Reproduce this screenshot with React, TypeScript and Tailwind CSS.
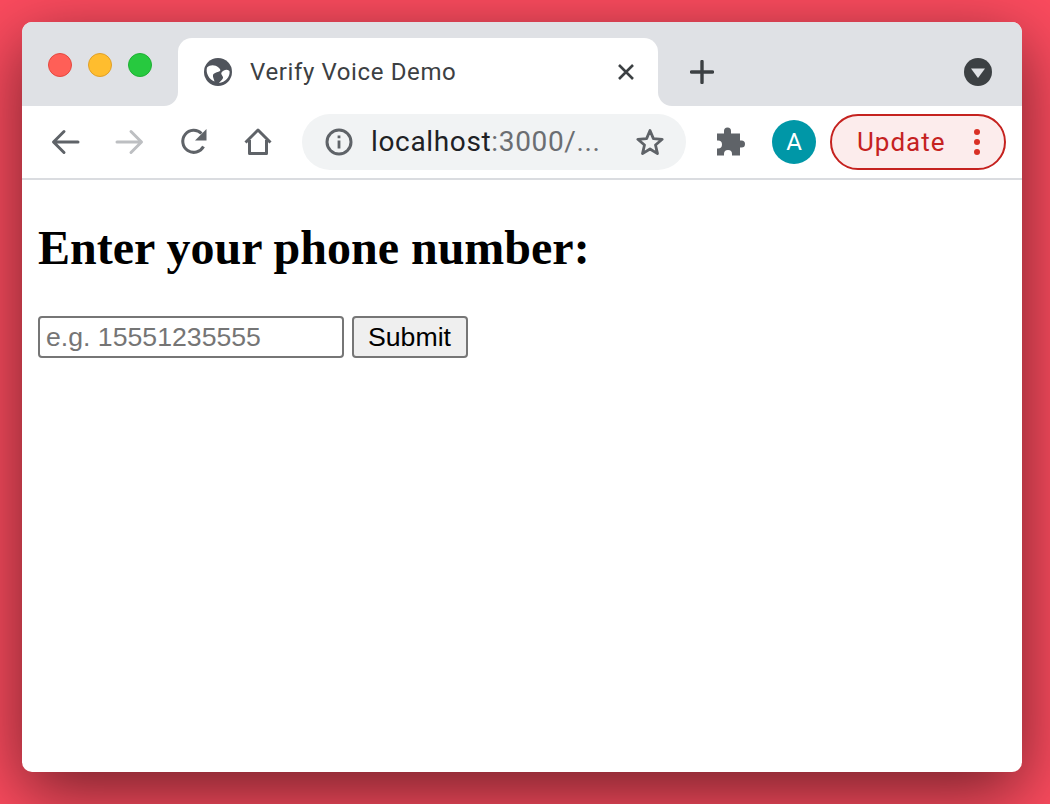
export default function App() {
  return (
    <div className="w-[1050px] h-[804px] overflow-hidden pt-[22px] pl-[22px] bg-[#fb4b5e]">
      <div className="w-[1000px] h-[750px] rounded-[10px] overflow-hidden bg-white flex flex-col shadow-[0_20px_68px_rgba(0,0,0,0.55)]" style={{ fontFamily: "Roboto, sans-serif" }}>
        <div className="h-[16px] bg-[#dfe1e5] shrink-0" />
        <div className="h-[68px] flex shrink-0">
          <div className="w-[156px] bg-[#dfe1e5] rounded-br-[14px] flex gap-[16px] pl-[26px] pt-[15px]">
            <span className="w-[24px] h-[24px] rounded-full bg-[#ff5f57] border border-[#e5483f]" />
            <span className="w-[24px] h-[24px] rounded-full bg-[#ffbd2e] border border-[#e0a028]" />
            <span className="w-[24px] h-[24px] rounded-full bg-[#27c93f] border border-[#1fb034]" />
          </div>
          <div className="w-[480px] bg-[#dfe1e5]">
            <div className="h-full bg-white rounded-t-[14px] flex items-center pl-[25px] pr-[23px]">
              <svg width="30" height="30" viewBox="0 0 30 30" className="shrink-0">
                <circle cx="15" cy="15" r="14" fill="#50545c" />
                <path d="M4 10.5C7 7.5 12 7.5 15.5 10.5C17 12 18 13 17 14C15 15.5 12.5 15 10.5 17C9 19 11 22 11.5 24.5C6 22.5 2.5 16 4 10.5Z" fill="#fff" />
                <path d="M26.5 14C24 12 21 12.5 18.5 15.5C17.5 17 19.5 18.5 20 20C20.5 22 17.5 24 16 26C22 25.5 27.5 20 26.5 14Z" fill="#fff" />
              </svg>
              <span className="ml-[17px] text-[24px] text-[#3c4043] leading-none tracking-[0.62px]">Verify Voice Demo</span>
              <svg width="18" height="18" viewBox="0 0 18 18" className="ml-auto shrink-0">
                <path d="M2 2 16 16M16 2 2 16" stroke="#3c4043" strokeWidth="2.6" />
              </svg>
            </div>
          </div>
          <div className="flex-1 bg-[#dfe1e5] rounded-bl-[14px] flex items-center pl-[32px] pr-[30px]">
            <svg width="24" height="24" viewBox="0 0 24 24">
              <path d="M12 1.5v21M1.5 12h21" stroke="#3c4043" strokeWidth="3.4" strokeLinecap="round" />
            </svg>
            <svg width="28" height="28" viewBox="0 0 28 28" className="ml-auto">
              <circle cx="14" cy="14" r="14" fill="#3c4043" />
              <path d="M7 10.5h14L14 20Z" fill="#dfe1e5" />
            </svg>
          </div>
        </div>
        <div className="h-[72px] flex items-center shrink-0 pl-[27px]">
          <svg width="32" height="32" viewBox="0 0 32 32" className="shrink-0">
            <path d="M29 16H5M15 5.5 4.5 16 15 26.5" fill="none" stroke="#5f6368" strokeWidth="3" strokeLinecap="round" strokeLinejoin="round" />
          </svg>
          <svg width="32" height="32" viewBox="0 0 32 32" className="ml-[33px] shrink-0">
            <path d="M3 16h24M17 5.5 27.5 16 17 26.5" fill="none" stroke="#bdbfc2" strokeWidth="3" strokeLinecap="round" strokeLinejoin="round" />
          </svg>
          <svg width="30" height="30" viewBox="0 0 30 30" className="ml-[33px] shrink-0">
            <path d="M24.5 19.5A11 11 0 1 1 22.5 6.5" fill="none" stroke="#5f6368" strokeWidth="3" />
            <path d="M27.5 2v11.5H16Z" fill="#5f6368" />
          </svg>
          <svg width="30" height="30" viewBox="0 0 30 30" className="ml-[34px] shrink-0">
            <path d="M2.5 15.5 15 3l12.5 12.5M6.5 13v13.5h17V13" fill="none" stroke="#5f6368" strokeWidth="3" strokeLinejoin="round" />
          </svg>
          <div className="ml-[29px] w-[384px] h-[56px] rounded-full bg-[#f1f3f4] flex items-center pl-[23px] pr-[21px] shrink-0">
            <svg width="28" height="28" viewBox="0 0 28 28" className="shrink-0">
              <circle cx="14" cy="14" r="12" fill="none" stroke="#5f6368" strokeWidth="3" />
              <path d="M12.6 12.5h2.8v8h-2.8zM12.6 7.5h2.8v2.8h-2.8z" fill="#5f6368" />
            </svg>
            <span className="ml-[18px] text-[28px] leading-none text-[#202124] whitespace-nowrap tracking-[0.65px]">localhost<span className="text-[#6b6e72]">:3000/...</span></span>
            <svg width="30" height="30" viewBox="0 0 30 30" className="ml-auto shrink-0">
              <path d="M15 3.5 18.4 11.6 27.2 12.3 20.5 18 22.5 26.6 15 22 7.5 26.6 9.5 18 2.8 12.3 11.6 11.6Z" fill="none" stroke="#5f6368" strokeWidth="2.8" strokeLinejoin="round" />
            </svg>
          </div>
          <svg width="30" height="30" viewBox="0 0 30 30" className="ml-[30px] shrink-0">
            <path d="M1 6.5H8V4a3.5 3.5 0 0 1 7 0V6.5H24V13.5H25.5a3.5 3.5 0 0 1 0 7H24V28.5H16V27a4 4 0 0 0-8 0V28.5H1V21.5H2a4 4 0 0 0 0-8H1Z" fill="#5f6368" />
          </svg>
          <div className="ml-[26px] w-[44px] h-[44px] rounded-full bg-[#0097a7] text-white flex items-center justify-center text-[24px] shrink-0">A</div>
          <div className="ml-[14px] w-[176px] h-[56px] rounded-full border-2 border-[#c5221f] bg-[#fcecec] flex items-center pl-[25px] pr-[24px] shrink-0">
            <span className="text-[26px] leading-none text-[#c5221f] tracking-[1px]">Update</span>
            <div className="ml-auto flex flex-col gap-[4px]">
              <span className="w-[6px] h-[6px] rounded-full bg-[#d93025]" />
              <span className="w-[6px] h-[6px] rounded-full bg-[#d93025]" />
              <span className="w-[6px] h-[6px] rounded-full bg-[#d93025]" />
            </div>
          </div>
        </div>
        <div className="h-[2px] bg-[#dadce0] shrink-0" />
        <div className="flex-1 pl-[16px] pt-[40px]">
          <h1 className="text-[48px] font-bold leading-[55px] text-black" style={{ fontFamily: '"Liberation Serif", serif' }}>Enter your phone number:</h1>
          <form className="mt-[41px] flex gap-[8px]" style={{ fontFamily: '"Liberation Sans", sans-serif' }}>
            <input placeholder="e.g. 15551235555" className="w-[306px] h-[42px] border-2 border-[#767676] rounded-[4px] px-[6px] text-[26.67px] text-black placeholder:text-[#757575] outline-none" />
            <button type="button" className="w-[116px] h-[42px] border-2 border-[#767676] rounded-[4px] bg-[#efefef] text-[26.67px] text-black leading-none pr-[1px]">Submit</button>
          </form>
        </div>
      </div>
    </div>
  );
}
